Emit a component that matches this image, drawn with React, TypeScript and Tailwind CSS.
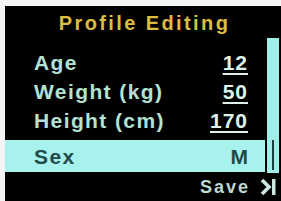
import React from "react";

const rows = [
  { label: "Age", value: "12" },
  { label: "Weight (kg)", value: "50" },
  { label: "Height (cm)", value: "170" },
];

export default function App() {
  const font = { fontFamily: '"Liberation Sans", Arial, sans-serif' };
  return (
    <div className="w-[281px] h-[201px] bg-[#f4f4f4] pt-[6px] pl-[5px] overflow-hidden" style={font}>
      <div className="w-[276px] h-[195px] bg-black flex flex-col">
        <div className="h-[32px] flex items-center justify-center pt-[1px] pl-[3px]">
          <span className="text-[20px] font-bold text-[#dcbc42] tracking-[2.4px] leading-none">Profile Editing</span>
        </div>
        <div className="flex">
          <div className="w-[260px] pt-[10px] flex flex-col">
            {rows.map((r) => (
              <div key={r.label} className="h-[29px] flex items-center justify-between pl-[29px] pr-[17px]">
                <span className="text-[21px] font-bold text-[#b2e2d4] tracking-[1.4px] leading-none">{r.label}</span>
                <span className="text-[21px] font-bold text-[#dcf2ea] tracking-[1px] leading-none underline underline-offset-[3px] decoration-[1.5px]">
                  {r.value}
                </span>
              </div>
            ))}
            <div className="mt-[5px] h-[32px] bg-[#a8f2ee] flex items-center justify-between pl-[29px] pr-[17px]">
              <span className="text-[21px] font-bold text-[#1f4b4c] tracking-[1.4px] leading-none">Sex</span>
              <span className="text-[21px] font-bold text-[#1f4b4c] leading-none">M</span>
            </div>
          </div>
          <div className="ml-[2px] w-[12px] h-[135px] bg-[#9eefe9] flex flex-col justify-end items-center pb-[3px]">
            <div className="w-[2px] h-[30px] bg-[#1e3c3c]" />
          </div>
        </div>
        <div className="flex-1 flex items-center justify-end pr-[4px] pb-[1px]">
          <span className="text-[18px] font-bold text-[#bcd8cf] tracking-[2px] leading-none mr-[10px]">Save</span>
          <svg width="17" height="18" viewBox="0 0 17 18">
            <path d="M2 2 L9 9 L2 16" fill="none" stroke="#cde8e2" strokeWidth="3.6" strokeLinejoin="miter" />
            <rect x="12" y="1" width="3.5" height="16" fill="#cde8e2" />
          </svg>
        </div>
      </div>
    </div>
  );
}
